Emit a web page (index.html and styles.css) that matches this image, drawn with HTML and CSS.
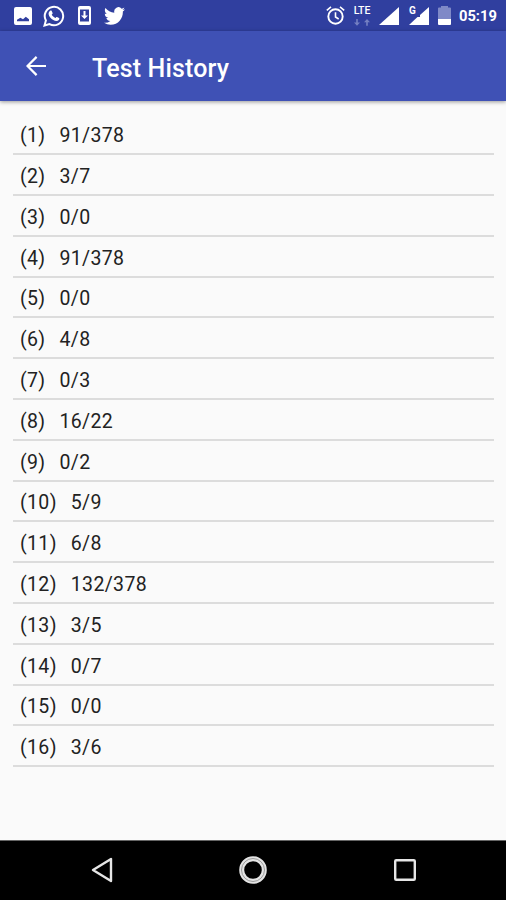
FILE: index.html
```html
<!DOCTYPE html>
<html lang="en">
<head>
<meta charset="utf-8">
<title>Test History</title>
<link rel="stylesheet" href="styles.css">
</head>
<body>
<header class="status">
  <div class="status-left">
    <svg width="18" height="18" viewBox="0 0 18 18"><path fill="#fff" fill-rule="evenodd" d="M2 0h14a2 2 0 0 1 2 2v14a2 2 0 0 1-2 2H2a2 2 0 0 1-2-2V2a2 2 0 0 1 2-2zM3 14.300h12v-2l-3.200-2.500-2.800 2.500-2.600-1.600L3 12.800z"/></svg>
    <svg class="whatsapp" width="22" height="22" viewBox="0 0 22 22"><path fill="none" stroke="#fff" stroke-width="2" d="M1.500 20.500l1.400-5a9.200 9.200 0 1 1 3.600 3.600z"/><path fill="#fff" d="M7.100 5.800c.5-.5 1.300-.5 1.600.1l.9 2c.2.600-.3 1-.9 1.700.9 1.700 2 2.700 3.700 3.500.7-.8 1-1.400 1.600-1.100l2 1c.600.3.3 1.400-.2 2-1.200 1.300-3.300 1.200-5.500.1-2.300-1.200-4.300-3.600-4.700-5.800-.2-1.500.5-2.700 1.500-3.500z"/></svg>
    <svg class="phone" width="13" height="19" viewBox="0 0 13 19"><path fill="#fff" fill-rule="evenodd" d="M2 0h9a2 2 0 0 1 2 2v15a2 2 0 0 1-2 2H2a2 2 0 0 1-2-2V2a2 2 0 0 1 2-2zM2 3.500v12h9v-12zM5.500 5h2v4.500H10L6.500 13 3 9.500h2.500z"/></svg>
    <svg class="bird" width="21" height="18" viewBox="0 2 24 20" preserveAspectRatio="none"><path fill="#fff" d="M23.953 4.570a10 10 0 01-2.825.775 4.958 4.958 0 002.163-2.723c-.951.555-2.005.959-3.127 1.184a4.920 4.920 0 00-8.384 4.482C7.690 8.095 4.067 6.130 1.640 3.162a4.822 4.822 0 00-.666 2.475c0 1.710.87 3.213 2.188 4.096a4.904 4.904 0 01-2.228-.616v.06a4.923 4.923 0 003.946 4.827 4.996 4.996 0 01-2.212.085 4.936 4.936 0 004.604 3.417 9.867 9.867 0 01-6.102 2.105c-.39 0-.779-.023-1.170-.067a13.995 13.995 0 007.557 2.209c9.053 0 13.998-7.496 13.998-13.985 0-.21 0-.42-.015-.63A9.935 9.935 0 0024 4.590z"/></svg>
  </div>
  <div class="status-right">
    <svg class="alarm" width="19" height="19" viewBox="0 0 19 19" fill="none" stroke="#fff"><circle cx="9.500" cy="10.500" r="7.200" stroke-width="1.900"/><path stroke-width="1.600" d="M9.500 6.200v4.800l3.200 2M.8 4.300L5 .9M18.200 4.300L14 .9"/></svg>
    <div class="lte">
      <span class="lte-label">LTE</span>
      <svg width="16" height="7" viewBox="0 0 16 7"><path fill="#7580c2" d="M2.200 0h1.600v3.500H6L3 6.800 0 3.500h2.200zM12.200 6.800h1.600V3.300H16L13 0l-3 3.300h2.200z"/></svg>
    </div>
    <svg class="signal" width="20" height="18" viewBox="0 0 20 18"><path fill="#fff" d="M20 0v18H0z"/></svg>
    <div class="roaming">
      <svg width="20" height="18" viewBox="0 0 20 18"><path fill="#fff" d="M20 0v18H0l8.500-8H11V8z"/></svg>
      <span class="roaming-label">G</span>
    </div>
    <svg class="battery" width="13" height="19" viewBox="0 0 13 19"><path fill="#7f89c7" d="M3 0h7v1.500h2a1 1 0 0 1 1 1V13H0V2.500a1 1 0 0 1 1-1h2z"/><path fill="#fff" d="M0 13h13v5a1 1 0 0 1-1 1H1a1 1 0 0 1-1-1z"/></svg>
    <time class="clock">05:19</time>
  </div>
</header>
<nav class="appbar">
  <svg width="20" height="20" viewBox="0 0 20 20" fill="none" stroke="#fff" stroke-width="2.200"><path d="M20 10H1.800M10.600.9L1.500 10l9.100 9.100"/></svg>
  <h1>Test History</h1>
</nav>
<main>
  <ul class="history">
    <li><span>(1)</span><span>91/378</span></li>
    <li><span>(2)</span><span>3/7</span></li>
    <li><span>(3)</span><span>0/0</span></li>
    <li><span>(4)</span><span>91/378</span></li>
    <li><span>(5)</span><span>0/0</span></li>
    <li><span>(6)</span><span>4/8</span></li>
    <li><span>(7)</span><span>0/3</span></li>
    <li><span>(8)</span><span>16/22</span></li>
    <li><span>(9)</span><span>0/2</span></li>
    <li><span>(10)</span><span>5/9</span></li>
    <li><span>(11)</span><span>6/8</span></li>
    <li><span>(12)</span><span>132/378</span></li>
    <li><span>(13)</span><span>3/5</span></li>
    <li><span>(14)</span><span>0/7</span></li>
    <li><span>(15)</span><span>0/0</span></li>
    <li><span>(16)</span><span>3/6</span></li>
  </ul>
</main>
<footer class="navbar">
  <svg width="24" height="26" viewBox="0 0 24 26"><path fill="none" stroke="#e6e6e6" stroke-width="2.400" stroke-linejoin="round" d="M22 2v22L4 13z"/></svg>
  <svg width="30" height="30" viewBox="0 0 30 30" fill="none"><circle cx="15" cy="15" r="11.300" stroke="#e4e4e4" stroke-width="5"/><circle cx="15" cy="15" r="11.500" stroke="#888" stroke-width=".8"/></svg>
  <svg width="24" height="24" viewBox="0 0 24 24"><rect x="2.200" y="2.200" width="19.600" height="19.600" rx="1" fill="none" stroke="#e6e6e6" stroke-width="2.400"/></svg>
</footer>
</body>
</html>
```
FILE: styles.css
```css
* { box-sizing: border-box; }
body {
  margin: 0;
  height: 900px;
  display: flex;
  flex-direction: column;
  overflow: hidden;
  background: #fafafa;
  color: #222;
  font-family: Roboto, sans-serif;
}
svg { display: block; flex: none; }
.status {
  height: 31px;
  padding: 0 10px 0 14px;
  display: flex;
  justify-content: space-between;
  background: #303f9f;
  color: #fff;
}
.status-left, .status-right { display: flex; align-items: center; height: 31px; }
.whatsapp { margin-left: 11px; }
.phone { margin-left: 13px; }
.bird { margin-left: 13px; }
.lte {
  width: 18px;
  margin-left: 8px;
  display: flex;
  flex-direction: column;
  align-items: center;
  gap: 3px;
}
.lte-label { font-size: 10.5px; line-height: 10px; font-weight: 500; }
.signal { margin-left: 8px; }
.roaming { position: relative; margin-left: 10px; }
.roaming-label {
  position: absolute;
  left: 0;
  top: -1px;
  font-size: 10px;
  line-height: 10px;
  font-weight: 700;
}
.battery { margin-left: 9px; }
.clock {
  width: 38px;
  margin-left: 8px;
  margin-right: -1px;
  padding-top: 1px;
  font-size: 14.7px;
  font-weight: 700;
  line-height: 20px;
  white-space: nowrap;
}
.appbar {
  height: 70px;
  padding: 2px 0 0 26px;
  display: flex;
  align-items: center;
  gap: 46px;
  background: #3f51b5;
  color: #fff;
  box-shadow: 0 1px 4px rgba(0, 0, 0, .4);
}
.appbar svg { margin-bottom: 2px; }
.appbar h1 { margin: 0; padding-top: 4px; font-size: 25px; font-weight: 500; line-height: 32px; letter-spacing: .15px; }
main { flex: 1; padding: 13.4px 12px 0 13px; }
.history { margin: 0; padding: 0; list-style: none; }
.history li {
  height: 40.8px;
  padding: 5px 0 0 7px;
  display: flex;
  align-items: center;
  gap: 14px;
  border-bottom: 2px solid #dcdcdc;
  font-size: 19.5px;
  line-height: 24px;
  letter-spacing: .35px;
}
.navbar {
  height: 60px;
  padding-bottom: 1px;
  display: flex;
  align-items: center;
  justify-content: center;
  gap: 125px;
  border-top: 1px solid #666;
  background: #000;
}
```
